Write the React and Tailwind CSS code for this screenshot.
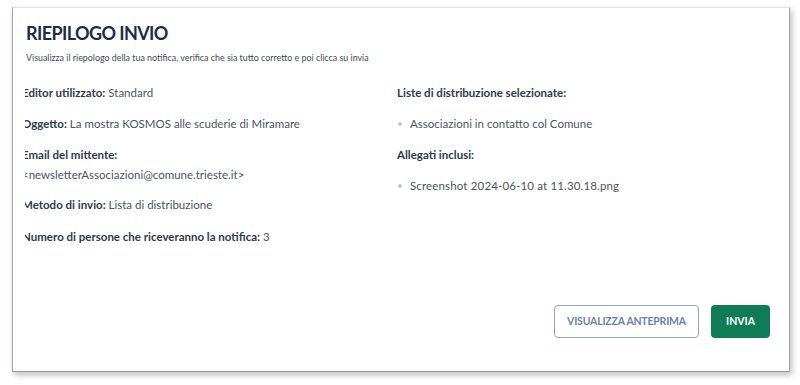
export default function App() {
  const left = [
    { label: "Editor utilizzato:", value: "Standard" },
    { label: "Oggetto:", value: "La mostra KOSMOS alle scuderie di Miramare" },
  ];

  return (
    <div className="w-[800px] h-[385px] bg-white pt-[7px] pl-[12px] font-['Lato',sans-serif]">
      <div className="w-[778px] h-[365px] bg-white border border-t-[#e4e4e4] border-x-[#a3a3a3] border-b-[#9a9a9a] shadow-[2px_3px_6px_rgba(0,0,0,0.25)] pl-[13px] pr-[19px] pt-[12px] flex flex-col">
        <h1 className="text-[18px] leading-[26px] font-bold text-[#1c2d4a] tracking-[-0.6px]">RIEPILOGO INVIO</h1>
        <p className="mt-[6px] text-[8.9px] leading-[12px] text-[#3d4a5c]">
          Visualizza il riepologo della tua notifica, verifica che sia tutto corretto e poi clicca su invia
        </p>

        <div className="mt-[21px] flex overflow-hidden -ml-px">
          {/* colonna sinistra */}
          <div className="w-[375px] -ml-[3px] flex flex-col text-[11.5px] leading-[16px] text-[#4b5563]">
            {left.map((row) => (
              <div key={row.label} className="mb-[15px]">
                <span className="font-bold text-[#2e3a4d]">{row.label}</span> {row.value}
              </div>
            ))}
            <div className="font-bold text-[#2e3a4d]">Email del mittente:</div>
            <div className="mt-[4px] mb-[14px]">&lt;newsletterAssociazioni@comune.trieste.it&gt;</div>
            <div className="mb-[16px]">
              <span className="font-bold text-[#2e3a4d]">Metodo di invio:</span> Lista di distribuzione
            </div>
            <div>
              <span className="font-bold text-[#2e3a4d]">Numero di persone che riceveranno la notifica:</span> 3
            </div>
          </div>

          {/* colonna destra */}
          <div className="flex flex-col text-[11.5px] leading-[16px] text-[#4b5563]">
            <div className="font-bold text-[#2e3a4d]">Liste di distribuzione selezionate:</div>
            <div className="mt-[15px] flex items-center gap-[8px] pl-[1px]">
              <span className="w-[4px] h-[4px] rounded-full bg-[#c4c8ce]" />
              <span>Associazioni in contatto col Comune</span>
            </div>
            <div className="mt-[15px] font-bold text-[#2e3a4d]">Allegati inclusi:</div>
            <div className="mt-[15px] flex items-center gap-[8px] pl-[1px]">
              <span className="w-[4px] h-[4px] rounded-full bg-[#c4c8ce]" />
              <span className="tracking-[0.15px]">Screenshot 2024-06-10 at 11.30.18.png</span>
            </div>
          </div>
        </div>

        <div className="mt-auto mb-[33px] flex justify-end gap-[12px]">
          <button className="w-[145px] h-[33px] rounded-[4px] border border-[#8ea3d3] text-[10.5px] font-bold text-[#6a7fae] tracking-[-0.2px]">
            VISUALIZZA ANTEPRIMA
          </button>
          <button className="w-[59px] h-[33px] rounded-[4px] bg-[#0e7c55] text-[10.5px] font-bold text-white">
            INVIA
          </button>
        </div>
      </div>
    </div>
  );
}
